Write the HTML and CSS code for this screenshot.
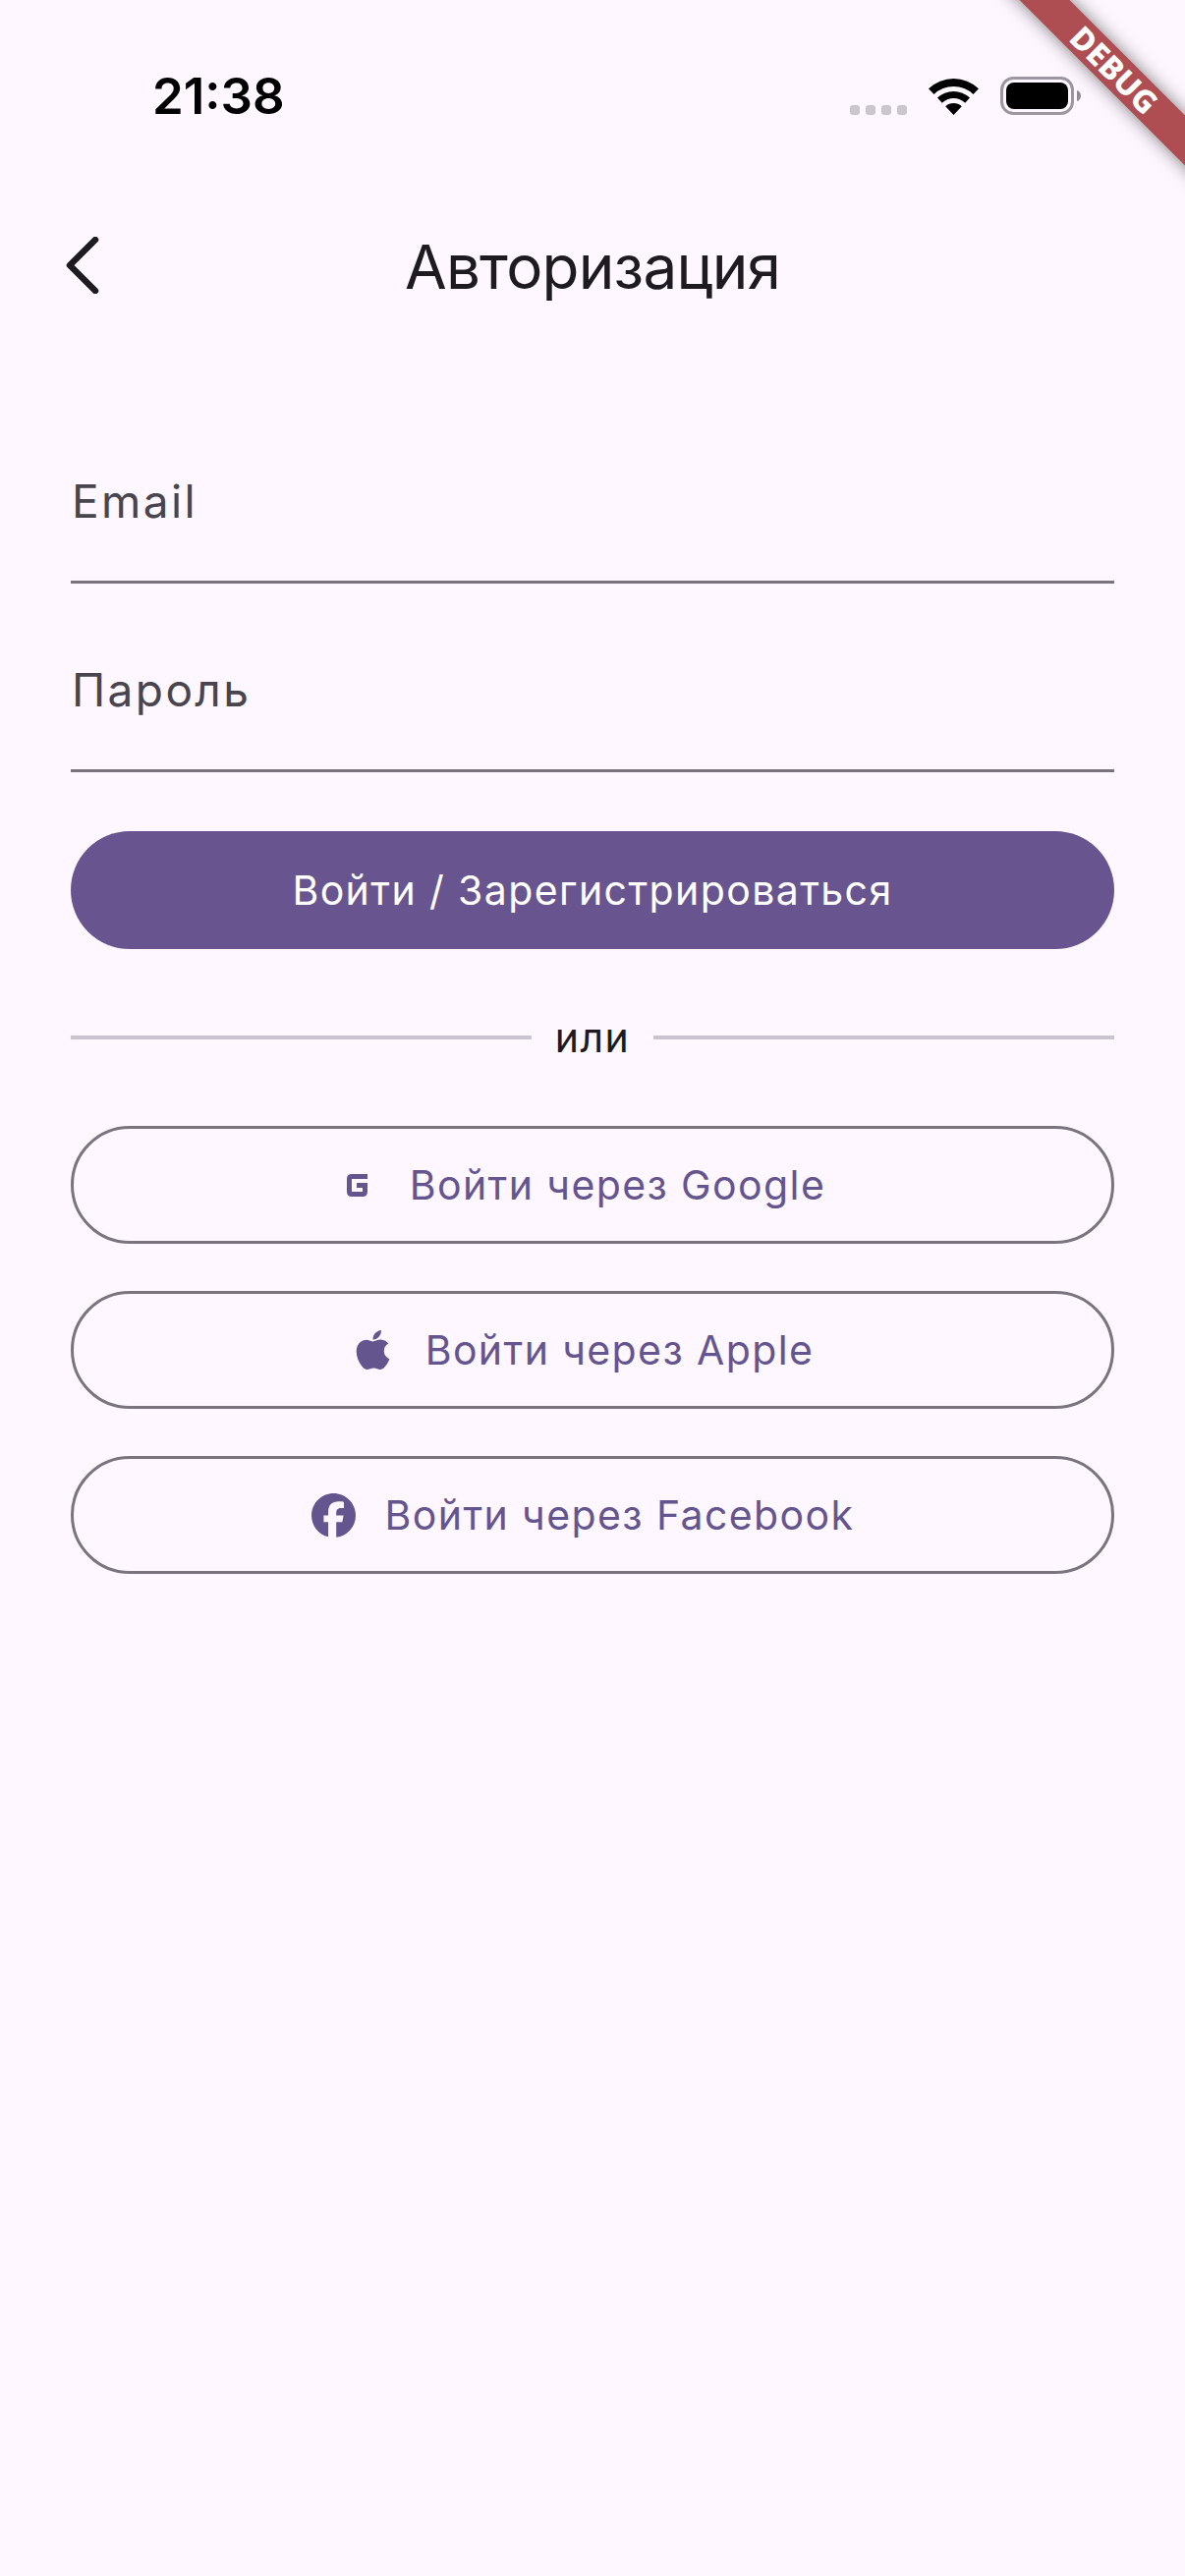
FILE: index.html
```html
<!DOCTYPE html>
<html lang="ru">
<head>
<meta charset="utf-8">
<title>Авторизация</title>
<link rel="stylesheet" href="styles.css">
</head>
<body>
<div class="screen">
  <div class="status">
    <span class="time">21:38</span>
    <div class="status-icons">
      <div class="dots"><i></i><i></i><i></i><i></i></div>
      <svg class="wifi" width="51" height="37" viewBox="0 0 51 37"><path d="M0 10.2A37 37 0 0 1 51 10.2L45.5 16A29 29 0 0 0 5.5 16ZM9 19.6A24 24 0 0 1 42 19.6L37.2 24.7A17 17 0 0 0 13.8 24.7ZM17.2 28.3A12 12 0 0 1 33.8 28.3L25.5 37Z"/></svg>
      <svg class="battery" width="82" height="39" viewBox="0 0 82 39"><rect x="1.5" y="1.5" width="72" height="36" rx="12" fill="none" stroke="#9c96a0" stroke-width="3"/><rect x="6" y="6" width="63" height="27" rx="8"/><path d="M78 14c2.500 .5 4 3 4 5.500s-1.500 5-4 5.500z" fill="#8f8a93"/></svg>
    </div>
  </div>
  <header class="appbar">
    <svg class="back" width="34" height="58" viewBox="0 0 34 58"><path d="M30 3L4 29L30 55" fill="none" stroke="#1d1b20" stroke-width="6.500" stroke-linecap="round" stroke-linejoin="round"/></svg>
    <h1 class="title">Авторизация</h1>
  </header>
  <main class="form">
    <div class="field"><span class="label">Email</span></div>
    <div class="field"><span class="label">Пароль</span></div>
    <button class="btn primary">Войти / Зарегистрироваться</button>
    <div class="divider"><span class="rule"></span><span class="or">или</span><span class="rule"></span></div>
    <div class="socials">
      <button class="btn outline shift-google">
        <svg class="ico ico-g" width="21" height="23" viewBox="0 0 21 23"><path d="M21 2.500H5Q2.500 2.500 2.500 5V18Q2.500 20.500 5 20.500H16Q18.500 20.500 18.500 18V11.500H10" fill="none" stroke="#65558f" stroke-width="5"/></svg>
        <span>Войти через Google</span>
      </button>
      <button class="btn outline shift-apple">
        <svg class="ico ico-a" width="35" height="40" viewBox="0 32 384 448"><path fill="#65558f" d="M318.700 268.700c-.2-36.700 16.400-64.400 50-84.800-18.800-26.900-47.200-41.700-84.700-44.600-35.500-2.800-74.300 20.700-88.500 20.700-15 0-49.400-19.700-76.400-19.700C63.300 141.200 4 184.800 4 273.500q0 39.300 14.400 81.200c12.800 36.700 59 126.700 107.200 125.200 25.200-.6 43-17.900 75.800-17.900 31.800 0 48.300 17.900 76.400 17.900 48.600-.7 90.400-82.500 102.600-119.300-65.200-30.700-61.700-90-61.700-91.900zm-56.600-164.200c27.300-32.400 24.800-61.900 24-72.500-24.100 1.400-52 16.400-67.900 34.900-17.500 19.800-27.800 44.300-25.600 71.900 26.100 2 49.900-11.400 69.500-34.300z"/></svg>
        <span>Войти через Apple</span>
      </button>
      <button class="btn outline shift-fb">
        <svg class="ico ico-f" width="45" height="45" viewBox="0 0 512 512"><path fill="#65558f" d="M512 256C512 114.600 397.400 0 256 0S0 114.600 0 256C0 376 82.700 476.800 194.200 504.500V334.200H141.400V256h52.800V222.300c0-87.100 39.400-127.500 125-127.500c16.200 0 44.200 3.200 55.700 6.400V172c-6-.6-16.500-1-29.600-1c-42 0-58.200 15.900-58.200 57.200V256h83.600l-14.400 78.200H287V510.100C413.800 494.800 512 386.900 512 256h0z"/></svg>
        <span>Войти через Facebook</span>
      </button>
    </div>
  </main>
  <div class="ribbon"><span>DEBUG</span></div>
</div>
</body>
</html>
```
FILE: styles.css
```css
* { box-sizing: border-box; }
html, body { margin: 0; padding: 0; background: #fef7ff; }
.screen {
  position: relative;
  width: 1206px;
  height: 2622px;
  overflow: hidden;
  background: #fef7ff;
  font-family: Inter, "Noto Sans", sans-serif;
}
.status {
  display: flex;
  justify-content: space-between;
  align-items: flex-end;
  height: 117px;
  padding: 0 106px 0 155px;
}
.time {
  font-weight: 600;
  font-size: 51px;
  line-height: 50px;
  color: #000;
  margin-bottom: -6px;
}
.status-icons { display: flex; align-items: flex-end; }
.dots { display: flex; gap: 6px; margin-right: 22px; }
.dots i { display: block; width: 10px; height: 10px; border-radius: 3px; background: #cbc6cd; }
.wifi { display: block; margin-right: 22px; }
.battery { display: block; }
.appbar {
  position: relative;
  display: flex;
  align-items: center;
  justify-content: center;
  height: 110px;
  margin-top: 100px;
}
.back { position: absolute; left: 67px; top: 24px; }
.title {
  margin: 0;
  font-size: 62px;
  font-weight: 400;
  letter-spacing: -0.8px;
  line-height: 96px;
  color: #1d1b20;
}
.form { display: flex; flex-direction: column; padding: 0 72px; margin-top: 75px; }
.field {
  height: 192px;
  border-bottom: 3px solid #79747e;
  padding-left: 1px;
}
.label {
  display: block;
  font-size: 46px;
  line-height: 64px;
  letter-spacing: 2.4px;
  color: #49454f;
  margin-top: 76px;
}
.btn {
  display: flex;
  align-items: center;
  justify-content: center;
  width: 100%;
  height: 120px;
  border-radius: 60px;
  font-family: Inter, sans-serif;
  font-size: 41px;
  letter-spacing: 1.4px;
  cursor: pointer;
}
.primary { margin-top: 60px; background: #68558f; color: #fff; border: 0; }
.divider { display: flex; align-items: center; height: 60px; margin-top: 60px; }
.rule { flex: 1; height: 4px; background: #cac4d0; }
.or { padding: 0 24px; font-size: 41px; line-height: 60px; letter-spacing: 1.4px; color: #1d1b20; }
.socials { display: flex; flex-direction: column; gap: 48px; margin-top: 60px; }
.outline { background: transparent; border: 3px solid #79747e; color: #65558f; gap: 24px; }
.ico { display: block; flex: none; }
.ico-g { margin-right: 19px; }
.ico-a { margin-right: 12px; }
.ico-f { margin-right: 6px; }
.shift-google { padding-right: 19px; }
.shift-apple { padding-right: 22px; }
.shift-fb { padding-right: 26px; }
.ribbon {
  position: absolute;
  left: 934px;
  top: 53px;
  width: 400px;
  height: 36px;
  transform: rotate(45deg);
  background: #ae4e52;
  box-shadow: 0 0 18px rgba(0, 0, 0, 0.5);
  display: flex;
  align-items: center;
  justify-content: center;
}
.ribbon span {
  font-family: "Noto Sans", sans-serif;
  font-weight: 800;
  font-size: 32px;
  line-height: 36px;
  color: #fff;
}
```
